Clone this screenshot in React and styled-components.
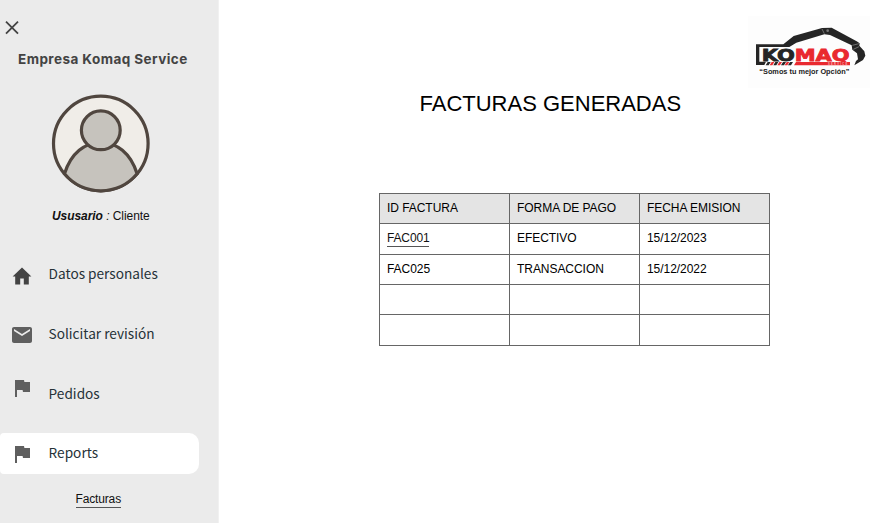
import React from "react";
import styled, { createGlobalStyle } from "styled-components";

const GlobalStyle = createGlobalStyle`
  * { box-sizing: border-box; }
  body { margin: 0; background: #fff; overflow: hidden; }
`;

const Page = styled.div`
  display: flex;
  width: 876px;
  height: 523px;
  font-family: "Liberation Sans", Arial, sans-serif;
  font-size: 12px;
  color: #000;
`;

const Sidebar = styled.aside`
  display: flex;
  flex-direction: column;
  flex: 0 0 219px;
  background: #ebebeb;
  border-right: 1px solid #f1f1f1;
`;

const CloseButton = styled.button`
  display: flex;
  width: 14px;
  height: 14px;
  margin: 21px 0 0 5px;
  padding: 0;
  border: 0;
  background: none;
`;

const Company = styled.h1`
  margin: 14px 0 0 18px;
  font: 700 13.5px/20px "Inter", sans-serif;
  letter-spacing: 0.44px;
  white-space: nowrap;
  color: #434343;
`;

const Avatar = styled.svg`
  flex: none;
  width: 100px;
  height: 100px;
  margin: 25px 0 0 51px;
`;

const UserLine = styled.p`
  margin: 14px 0 0 52px;
  height: 16px;
  line-height: 16px;
  letter-spacing: -0.06px;
  white-space: nowrap;
  color: #111;
`;

const Menu = styled.nav`
  display: flex;
  flex-direction: column;
  gap: 18.8px;
  margin-top: 30px;
`;

const MenuItem = styled.a`
  display: flex;
  align-items: center;
  gap: 14.6px;
  width: 198.5px;
  height: 41px;
  padding-left: 10px;
  border-radius: 4px 10px 10px 4px;
  background: ${(p) => (p.$active ? "#fff" : "transparent")};
  font: 400 13.65px/22px "Noto Sans CJK SC", sans-serif;
  white-space: nowrap;
  color: #263238;
`;

const MenuLabel = styled.span`
  padding-bottom: 3px;
`;

const MenuIcon = styled.svg`
  flex: none;
  width: 24px;
  height: 24px;
  margin-top: ${(p) => p.$shift}px;
  fill: ${(p) => p.$tone};
`;

const Link = styled.span`
  display: inline-block;
  height: 16px;
  line-height: 14px;
  letter-spacing: -0.15px;
  border-bottom: 1px solid #555;
  color: #111;
`;

const SubMenu = styled.div`
  margin: 18px 0 0 75.5px;
`;

const Main = styled.main`
  display: flex;
  flex-direction: column;
  flex: 1;
`;

const Header = styled.header`
  display: flex;
  justify-content: flex-end;
  height: 90px;
  padding-top: 10px;
`;

const Logo = styled.svg`
  width: 136px;
  height: 80px;
`;

const Title = styled.h2`
  margin: 0 0 0 200.5px;
  font-weight: 400;
  font-size: 22px;
  line-height: 28px;
  white-space: nowrap;
`;

const Table = styled.table`
  width: 391px;
  margin: 75px 0 0 160px;
  border-collapse: collapse;
  table-layout: fixed;
`;

const Row = styled.tr`
  height: ${(p) => p.$height}px;
  background: ${(p) => (p.$head ? "#e4e4e4" : "#fff")};
`;

const Cell = styled.td`
  padding: 7px 0 0 7px;
  border: 1px solid #666;
  font-weight: 400;
  line-height: 14px;
  letter-spacing: -0.05px;
  text-align: left;
  vertical-align: top;
  white-space: nowrap;
`;

const FLAG = "M14.4 6L14 4H5v17h2v-7h5.6l.4 2h7V6z";

const items = [
  { label: "Datos personales", shift: 2, tone: "#434343", path: "M10.2 20.5v-6h3.6v6h5v-8h2.6L12 3.5 2.6 12.5h2.6v8z" },
  { label: "Solicitar revisión", shift: 1, tone: "#5f5f5f", path: "M20 4H4c-1.1 0-2 .9-2 2v12c0 1.1.9 2 2 2h16c1.1 0 2-.9 2-2V6c0-1.1-.9-2-2-2zm0 4l-8 5-8-5V6l8 5 8-5v2z" },
  { label: "Pedidos", shift: -12, tone: "#5f5f5f", path: FLAG },
  { label: "Reports", shift: 0, tone: "#5f5f5f", path: FLAG, active: true },
];

const columns = ["ID FACTURA", "FORMA DE PAGO", "FECHA EMISION"];

const rows = [
  { cells: ["FAC001", "EFECTIVO", "15/12/2023"], link: true, height: 31 },
  { cells: ["FAC025", "TRANSACCION", "15/12/2022"], height: 30 },
  { cells: ["", "", ""], height: 30 },
  { cells: ["", "", ""], height: 31 },
];

function KomaqLogo() {
  return (
    <Logo viewBox="0 0 408 240" role="img" aria-label="Komaq Service">
      <path fill="#fdfdfd" d="M24 18h366v216H24z" />
      <path fill="#252525" d="M48 103H130L161 78L246 54L275 53L350 94L359 100L358 107L373 124L376 137L369 150L343 166L348 153L354 148L351 130L337 119L335 106L270 75L253 73L169 98L148 111H58V155H78L73 165H48Z" />
      <path stroke="#bbb" strokeWidth="1.5" d="M246 57l7 14M337 106l20-5M340 118l17-8" />
      <circle cx="263" cy="62" r="4" fill="#777" />
      <g strokeWidth="2.4">
        <text x="65" y="152" fontFamily="DejaVu Sans" fontWeight="700" fontSize="48" textLength="264" lengthAdjust="spacingAndGlyphs">
          <tspan fill="#252525" stroke="#252525">KO</tspan><tspan fill="#e9292f" stroke="#e9292f">MAQ</tspan>
        </text>
      </g>
      <path fill="#252525" d="M83 156h9l-6 10h-9zM106 156h9l-6 10h-9zM129 156h9l-6 10h-9zM150 156h9l-6 10h-9z" />
      <path fill="#e9292f" d="M95 156h8l-6 10h-8zM118 156h8l-6 10h-8zM140 156h8l-6 10h-8zM168 156H330V166H162Z" />
      <text x="264" y="164" fill="#f6b5b7" fontFamily="Liberation Sans" fontWeight="700" fontSize="8" textLength="58">SERVICE</text>
      <text x="58" y="191" fill="#222" fontFamily="Liberation Sans" fontWeight="700" fontSize="20" textLength="270" lengthAdjust="spacingAndGlyphs">“Somos tu mejor Opción”</text>
    </Logo>
  );
}

export default function App() {
  return (
    <Page>
      <GlobalStyle />
      <Sidebar>
        <CloseButton aria-label="Cerrar">
          <svg width="14" height="14" viewBox="0 0 14 14">
            <path d="M1 .7L13 12.7M13 .7L1 12.7" stroke="#434343" strokeWidth="1.8" fill="none" />
          </svg>
        </CloseButton>
        <Company>Empresa Komaq Service</Company>
        <Avatar viewBox="0 0 100 100" stroke="#50463f" strokeWidth="3.2">
          <circle cx="49.8" cy="49.5" r="47.3" fill="#f0ede8" />
          <path d="M13.5 79.8C20 59 34 48.5 49.8 48.5S79.6 59 86.1 79.8A47.3 47.3 0 0 1 13.5 79.8Z" fill="#c6c3bd" />
          <circle cx="49.8" cy="36.3" r="19.4" fill="#c6c3bd" />
        </Avatar>
        <UserLine><b><i>Ususario</i></b><i> : </i>Cliente</UserLine>
        <Menu>
          {items.map((item) => (
            <MenuItem key={item.label} $active={item.active}>
              <MenuIcon viewBox="0 0 24 24" $shift={item.shift} $tone={item.tone}>
                <path d={item.path} />
              </MenuIcon>
              <MenuLabel>{item.label}</MenuLabel>
            </MenuItem>
          ))}
        </Menu>
        <SubMenu><Link>Facturas</Link></SubMenu>
      </Sidebar>
      <Main>
        <Header><KomaqLogo /></Header>
        <Title>FACTURAS GENERADAS</Title>
        <Table>
          <thead>
            <Row $head $height={30}>
              {columns.map((name) => (
                <Cell as="th" key={name}>{name}</Cell>
              ))}
            </Row>
          </thead>
          <tbody>
            {rows.map((row, r) => (
              <Row key={r} $height={row.height}>
                {row.cells.map((text, c) => (
                  <Cell key={c}>{row.link && c === 0 ? <Link>{text}</Link> : text}</Cell>
                ))}
              </Row>
            ))}
          </tbody>
        </Table>
      </Main>
    </Page>
  );
}
